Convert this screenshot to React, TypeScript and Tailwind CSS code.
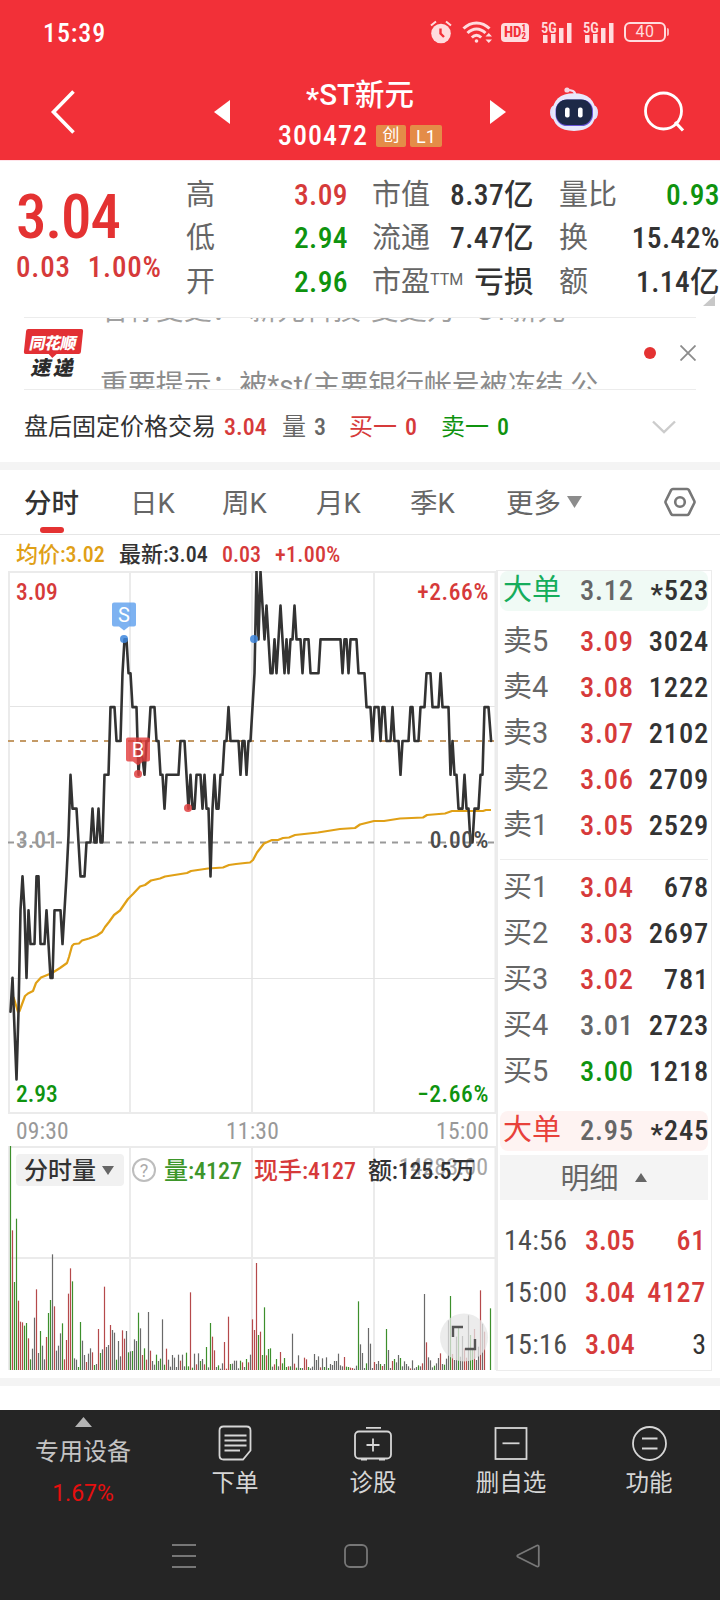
import type { ReactNode } from "react";

const NUM = "font-['Roboto_Condensed','Noto_Sans_CJK_SC',sans-serif]";
const CJK = "font-['Roboto','Noto_Sans_CJK_SC',sans-serif]";

const RED = "text-[#d63a3a]";
const GREEN = "text-[#0f930f]";
const DARK = "text-[#333333]";
const GRAY = "text-[#666666]";

// [minute, price in cents]
const PRICES: [number, number][] = [
  [0, 296], [1, 297], [3, 294], [4, 296], [5, 299], [6, 300], [7, 299], [8, 297], [9, 299], [10, 298],
  [12, 298], [13, 300], [14, 300], [15, 298], [17, 298], [18, 299], [19, 298], [20, 297], [21, 297], [22, 299],
  [25, 299], [26, 298], [27, 299], [28, 300], [29, 301.2], [30, 303], [31, 302], [33, 302], [34, 301], [35, 300],
  [37, 300], [38, 301], [40, 301], [41, 302], [42, 301], [43, 301], [44, 302], [45, 301], [46, 301], [47, 303],
  [49, 303], [50, 305], [52, 305], [53, 304], [55, 304], [56, 306], [57, 307], [58, 307], [59, 306], [60, 306],
  [61, 305], [63, 305], [64, 303], [65, 304], [66, 303.5], [67, 303], [68, 304], [69, 304], [70, 305], [72, 305],
  [73, 304], [74, 304], [75, 303], [76, 303], [77, 302], [78, 303], [84, 303], [85, 304], [87, 304], [88, 303],
  [89, 302], [90, 303], [91, 302], [92, 302], [93, 303], [95, 303], [96, 302], [97, 303], [98, 302], [99, 302],
  [100, 300], [101, 302], [102, 303], [103, 302], [104, 302], [105, 303], [106, 303], [107, 304], [108, 304], [109, 305],
  [110, 304], [114, 304], [115, 303], [116, 304], [117, 304], [118, 303], [119, 304], [120, 304], [121, 305], [122, 306],
  [123, 309], [124, 307], [125, 309], [126, 308], [127, 307], [128, 308], [129, 307], [130, 306], [131, 306], [132, 307],
  [133, 306], [134, 307], [135, 308], [136, 307], [137, 306], [138, 307], [139, 306], [140, 307], [141, 307], [142, 308],
  [143, 307], [145, 307], [146, 306], [147, 307], [149, 307], [150, 306], [154, 306], [155, 307], [165, 307], [166, 306],
  [167, 307], [168, 307], [169, 306], [170, 307], [173, 307], [174, 306], [177, 306], [178, 305], [180, 305], [181, 304],
  [182, 305], [184, 305], [185, 304], [186, 305], [187, 305], [188, 304], [190, 304], [191, 305], [192, 304], [194, 304],
  [195, 303], [196, 304], [199, 304], [200, 305], [201, 305], [202, 304], [204, 304], [205, 305], [207, 305], [208, 306],
  [210, 306], [211, 305], [214, 305], [215, 306], [216, 305], [219, 305], [220, 303], [221, 304], [222, 303], [223, 303],
  [224, 302], [226, 302], [227, 303], [228, 302], [229, 302], [230, 301], [231, 301], [232, 302], [234, 302], [235, 303],
  [236, 303], [237, 305], [239, 305], [240.3, 304],
];

const AVERAGE =
  "13.5,997 18,1012 19.5,1011 25,996 28,993.5 33,991 36,983 41,977.5 46,975.5 52,973 60,968 67,963 69,957 72,946 74,944 79,943.5 82,940.5 89,938.5 97,935.5 102,932 105,927 109,922 114,915 120,910.5 128,899 133,894 140,886.5 145,885 151,880.5 160,878.5 165,876.5 187,873 191,871 208,868.5 223,867.5 229,865 236,864 245,863 250,862.5 253,860 257,852.5 264,843.5 272,840 278,840 283,838 289,837.5 295,835 318,832.5 340,829 355,828 360,824.5 374,821 384,821 400,818.5 423,817.5 427,815 445,813.5 452,811 483,811 486,810 491,810";

// One bar per minute: height followed by its colour (r up, g down, k flat)
const VOLUMES =
  "672g 419r 264g 454g 208r 145r 143r 133g 141g 95r 32g 64k 157k 242r 51k 117g 73k 32k 99r 171g 210g 347k 191r 58k 73k 110k 140g 32r 90r 229r 305r 266g 35k 31k 9g 144g 88k 45k 24r 49k 65k 53r 15g 18k 123r 51g 62k 250r 69k 75k 135r 120k 112k 31g 87k 41k 119r 94r 117k 53g 56k 57g 92k 87k 172g 125k 45r 65g 31r 174k 58r 27k 16k 46g 27k 34g 152k 16g 64r 31k 10k 45k 37k 9k 46k 28r 46k 11k 52g 11g 233r 7g 49k 17r 50k 27g 33k 17r 69g 8k 141g 100r 59r 9k 14g 4k 20k 84r 4r 160r 18g 19k 28k 28k 5k 28g 23r 9k 33g 23r 46k 152r 120r 321r 105g 115r 45g 188g 44r 63g 65g 10k 17r 33g 11k 54r 20g 36g 9g 11r 11g 109k 19r 7g 44k 6g 6k 37r 32r 9g 5k 10k 48k 30k 41k 8r 35k 9g 38k 6g 18k 15k 27k 27k 49k 14k 11k 39r 10g 9g 7r 6r 4k 13k 206g 77k 51k 6k 20g 126k 79k 6k 24r 18k 27k 18g 12r 18k 123g 60k 6k 27r 33g 23k 45k 36g 11k 26k 18k 11k 5r 29k 5k 9k 14g 11k 20r 228k 83r 38k 29k 8k 13g 20k 36k 50r 18k 16g 34k 149k 222g 48r 30k 100k 130g 40k 102k 65r 37r 164k 105g 60g 123r 30k 70k 239r 139k 115r 0k 0k 185g".split(" ");

const BAR_COLORS: Record<string, string> = { r: "#b5494b", g: "#3d8f2c", k: "#6a6a6a" };

const minuteX = (m: number) => 10.5 + m * 2;
const priceY = (p: number) => 842.5 - (p - 301) * 33.85;

const STATS = [
  [["高", "3.09", RED], ["市值", "8.37亿", DARK], ["量比", "0.93", GREEN]],
  [["低", "2.94", GREEN], ["流通", "7.47亿", DARK], ["换", "15.42%", DARK]],
  [["开", "2.96", GREEN], ["市盈", "亏损", DARK], ["额", "1.14亿", DARK]],
];

const ASKS = [
  ["卖5", "3.09", "3024", RED],
  ["卖4", "3.08", "1222", RED],
  ["卖3", "3.07", "2102", RED],
  ["卖2", "3.06", "2709", RED],
  ["卖1", "3.05", "2529", RED],
];

const BIDS = [
  ["买1", "3.04", "678", RED],
  ["买2", "3.03", "2697", RED],
  ["买3", "3.02", "781", RED],
  ["买4", "3.01", "2723", GRAY],
  ["买5", "3.00", "1218", GREEN],
];

const TRADES = [
  ["14:56", "3.05", "61", RED],
  ["15:00", "3.04", "4127", RED],
  ["15:16", "3.04", "3", DARK],
];

function Signal() {
  return (
    <svg width="31" height="23" viewBox="0 0 31 23" fill="#ffdcde" overflow="visible">
      <text x="0" y="11.5" fontSize="14.5" fontWeight="600" className={NUM}>5G</text>
      <rect x="2" y="14" width="4.5" height="8" />
      <rect x="10" y="13" width="4.5" height="9" />
      <rect x="18" y="7" width="4.5" height="15" />
      <rect x="26" y="2" width="4.5" height="20" />
    </svg>
  );
}

function StatusBar() {
  return (
    <div className="flex h-16 items-center pl-[43px]">
      <span className={`${NUM} w-[387px] pt-[2px] text-[26px] font-medium tracking-[0.9px] text-white`}>15:39</span>
      <svg width="22" height="24" viewBox="0 0 22 24" fill="none" stroke="#ffdcde" strokeWidth="2">
        <circle cx="11" cy="13.5" r="9.8" fill="#ffdcde" stroke="none" />
        <path d="M1 5.5 6 1.5M21 5.5 16 1.5" />
        <path d="M10.5 8.5v5l3.5 3.5" stroke="#f23038" strokeWidth="2.4" />
      </svg>
      <svg className="ml-[10px]" width="31" height="24" viewBox="0 0 31 24" fill="none" stroke="#ffdcde" strokeWidth="3">
        <path d="M1.5 8.5C9 1 20 1 27.5 8.5M5.5 13C11 7.5 18 7.5 23.5 13M9.8 17.5C13 14.5 16 14.5 19.2 17.5" />
        <circle cx="14.5" cy="21" r="1.8" fill="#ffdcde" stroke="none" />
        <path d="M23.5 16.5 26.8 13l3.2 3.5zM23.5 19.5l3.3 3.5 3.2-3.5z" fill="#ffdcde" stroke="none" />
      </svg>
      <div className={`${NUM} ml-2 flex h-[19px] w-7 items-center justify-center rounded bg-[#ffdcde] text-[15px] font-bold text-[#f23038]`}>
        HD
        <span className="flex flex-col text-[9px] leading-[8px]">
          <span>1</span>
          <span>2</span>
        </span>
      </div>
      <div className="ml-3 flex gap-[11px]">
        <Signal />
        <Signal />
      </div>
      <div className="ml-[10px] flex items-center gap-px">
        <div className={`${CJK} flex h-5 w-[42px] items-center justify-center rounded-md border-2 border-[#ffdcde] bg-[#f3393f] text-[16px] tracking-[0.5px] text-[#ffdcde]`}>
          40
        </div>
        <div className="h-[8px] w-[2px] rounded-r bg-[#ffb4b8]" />
      </div>
    </div>
  );
}

function Robot() {
  return (
    <svg width="50" height="46" viewBox="0 0 50 46">
      <path d="M25 8C25.5 4 22 3 16.5 3" fill="none" stroke="#f3dcf0" strokeWidth="2.2" />
      <circle cx="17" cy="3" r="2.6" fill="#f5d5e2" />
      <ellipse cx="4" cy="25.5" rx="4" ry="7" fill="#dfe1fc" />
      <ellipse cx="44" cy="25.5" rx="4" ry="7" fill="#dfe1fc" />
      <path d="M24 6.3c14 0 21.5 7 21.5 19.2S38 43.9 24 43.9 2.5 37.7 2.5 25.5 10 6.3 24 6.3z" fill="#e8e8fb" />
      <rect x="5.5" y="12.5" width="37.5" height="26.5" rx="11.5" fill="#6a55d8" />
      <rect x="6" y="12.5" width="36" height="25.5" rx="11" fill="#1d2947" />
      <rect x="15" y="20.5" width="4.6" height="10" rx="2" fill="#fff" />
      <rect x="28" y="20.5" width="4.6" height="10" rx="2" fill="#fff" />
    </svg>
  );
}

function TitleBar() {
  return (
    <div className="flex h-24 items-center pl-[50px] text-white">
      <svg width="26" height="44" viewBox="0 0 26 44" fill="none" stroke="#fff" strokeWidth="3.6">
        <path d="M23.5 1.5 3.5 22l20 20.5" />
      </svg>
      <svg className="ml-[138px]" width="16" height="24" fill="#fff">
        <path d="M16 0v24L0 12z" />
      </svg>
      <div className="flex w-[260px] flex-col items-center">
        <div className={`${CJK} mt-[6px] text-[29.5px] leading-[38px] font-medium`}>
          <span className="inline-block translate-y-[4px]">*</span>
          ST新元
        </div>
        <div className="flex h-[40px] items-center gap-1 pt-1">
          <span className={`${NUM} mr-1 text-[28px] font-medium tracking-[1px]`}>300472</span>
          <span className={`${CJK} flex h-[22px] w-[30px] items-center justify-center rounded-xs bg-[#e48c48] text-[17px]`}>创</span>
          <span className={`${CJK} flex h-[22px] w-8 items-center justify-center rounded-xs bg-[#e48c48] text-[18px]`}>L1</span>
        </div>
      </div>
      <svg width="16" height="24" fill="#fff">
        <path d="M0 0v24l16-12z" />
      </svg>
      <div className="-mt-1 ml-[44px]">
        <Robot />
      </div>
      <svg className="ml-[43px]" width="42" height="42" viewBox="0 0 42 42" fill="none" stroke="#fff" strokeWidth="2.8">
        <circle cx="20.5" cy="20" r="18" />
        <path d="m32 31 8 8.5" strokeWidth="3.2" />
      </svg>
    </div>
  );
}

function Quote() {
  return (
    <section className="flex h-[157px] border-t border-[#ffe4ea] pl-4">
      <div className="w-[170px]">
        <div className={`${NUM} mt-[22px] text-[61px] leading-[68px] font-medium tracking-[-1.2px] text-[#e43232]`}>3.04</div>
        <div className={`${NUM} flex gap-[17px] text-[29px] leading-8 font-medium tracking-[0.8px] ${RED}`}>
          <span>0.03</span>
          <span>1.00%</span>
        </div>
      </div>
      <div className="mt-[12px] w-[534px]">
        {STATS.map((row) => (
          <div key={row[0][0]} className="grid h-[43.5px] grid-cols-[162px_24px_162px_25px_161px] items-center">
            {row.map(([label, value, color], i) => (
              <div key={label} className={`flex items-center justify-between ${i === 0 ? "col-start-1" : i === 1 ? "col-start-3" : "col-start-5"}`}>
                <span className={`${CJK} flex text-[29px] leading-9 ${GRAY}`}>
                  {label}
                  {label === "市盈" && <sup className="top-[8px] h-4 text-[16px] leading-none">TTM</sup>}
                </span>
                <span className={`${NUM} text-[29.5px] leading-9 font-medium tracking-[0.4px] whitespace-nowrap ${color}`}>{value}</span>
              </div>
            ))}
          </div>
        ))}
        <svg className="-mt-[9px] ml-[517px]" width="12" height="11" fill="#c8c8c8">
          <path d="M12 0v11H0z" />
        </svg>
      </div>
    </section>
  );
}

function News() {
  return (
    <section className="mx-6 flex h-[73px] items-center border-y border-[#ececec]">
      <div className="w-[60px]">
        <div className="relative ml-px flex h-[25px] w-[57px] -skew-x-6 items-center justify-center rounded-xs bg-[#e23034] text-white">
          <span className="-skew-x-6 font-['Noto_Sans_CJK_SC',sans-serif] text-[16px] font-black tracking-[-0.5px]">同花顺</span>
          <svg className="absolute top-[24px] left-6" width="10" height="6" fill="#e23034">
            <path d="M0 0h10L5 5z" />
          </svg>
        </div>
        <div className="mt-[2px] ml-[8px] -skew-x-12 font-['Noto_Sans_CJK_SC',sans-serif] text-[20px] leading-[22px] font-black tracking-[2.5px] text-[#2b2b2b]">
          速递
        </div>
      </div>
      <div className={`${CJK} h-full w-[526px] overflow-hidden pl-4 text-[27.9px] whitespace-pre`}>
        <p className="-mt-[23px] h-[62px] leading-[32px] text-[#a0a0a0]">名称变更：“新元科技”变更为“*ST新元”</p>
        <p className="mt-[10px] leading-[38px] text-[#8c8c8c]">重要提示：被*st(主要银行帐号被冻结 公</p>
      </div>
      <div className="ml-[34px] size-3 -translate-y-px rounded-full bg-[#e43232]" />
      <svg className="ml-6 -translate-y-px" width="16" height="16" stroke="#8c8c8c" strokeWidth="1.8">
        <path d="m.5.5 15 15m0-15-15 15" />
      </svg>
    </section>
  );
}

function AfterHours() {
  return (
    <section className={`${CJK} flex h-[72px] items-center pt-[2px] pl-6 text-[24px] ${DARK}`}>
      <span className="w-[200px]">盘后固定价格交易</span>
      <span className={`${NUM} w-[58px] font-medium ${RED}`}>3.04</span>
      <span className={`w-8 ${GRAY}`}>量</span>
      <span className={`${NUM} w-[35px] font-medium ${GRAY}`}>3</span>
      <span className={`w-[56px] ${RED}`}>买一</span>
      <span className={`${NUM} w-[36px] font-medium ${RED}`}>0</span>
      <span className={`w-[56px] ${GREEN}`}>卖一</span>
      <span className={`${NUM} w-[155px] font-medium ${GREEN}`}>0</span>
      <svg className="-mt-px" width="24" height="14" fill="none" stroke="#cccccc" strokeWidth="2.4">
        <path d="m1 1.5 11 10.5 11-10.5" />
      </svg>
    </section>
  );
}

function Tabs() {
  return (
    <nav className={`${CJK} flex h-[65px] items-center border-b border-[#e6e6e6] pt-[3px] pl-6 text-[27.5px] ${GRAY}`}>
      <div className={`relative w-[106px] font-medium ${DARK}`}>
        分时
        <div className="absolute -bottom-[9px] left-4 h-[6px] w-6 rounded-full bg-[#e43232]" />
      </div>
      <span className="w-[92px]">日K</span>
      <span className="w-[94px]">周K</span>
      <span className="w-[94px]">月K</span>
      <span className="w-[96px]">季K</span>
      <span className="w-[56px]">更多</span>
      <svg className="-mt-[3px] ml-[5px]" width="15" height="12" fill="#8c8c8c">
        <path d="M0 0h15L7.5 12z" />
      </svg>
      <svg className="-mt-[3px] ml-[82px]" width="32" height="30" viewBox="0 0 32 30" fill="none" stroke="#777" strokeWidth="2.6">
        <path d="M8.8 2h14.4q1 0 1.6 1l5.5 11q.5 1 0 2l-5.5 11q-.6 1-1.6 1H8.8q-1 0-1.6-1L1.7 16q-.5-1 0-2L7.2 3q.6-1 1.6-1z" />
        <circle cx="16" cy="15" r="4.8" />
      </svg>
    </nav>
  );
}

function Legend() {
  return (
    <div className={`${NUM} flex h-[35px] items-center pt-[3px] pl-4 text-[22px] font-medium whitespace-nowrap`}>
      <span className="w-[103px] text-[#e0a016]">均价:3.02</span>
      <span className={`w-[103px] ${DARK}`}>最新:3.04</span>
      <span className={`w-[53px] ${RED}`}>0.03</span>
      <span className={`tracking-[0.3px] ${RED}`}>+1.00%</span>
    </div>
  );
}

interface MarkerProps {
  x: number;
  y: number;
  letter: string;
  color: string;
}

function Marker({ x, y, letter, color }: MarkerProps) {
  return (
    <g fillOpacity={0.8}>
      <path d={`M${x - 10} ${y}h20q2 0 2 2v20q0 2-2 2h-5l-5 4-5-4h-5q-2 0-2-2v-20q0-2 2-2z`} fill={color} />
      <text x={x} y={y + 19.5} textAnchor="middle" fontSize="20" fontWeight="400" fill="#fff" fillOpacity={1} className={CJK}>
        {letter}
      </text>
    </g>
  );
}

function PriceChart() {
  const points = PRICES.map(([m, p]) => `${minuteX(m)},${priceY(p)}`).join(" ");
  return (
    <div className={`${NUM} relative h-[543px] text-[23.5px] leading-6 font-medium`}>
      <svg width="489" height="543" viewBox="8 571 489 543" fill="none">
        <path d="M130 571v542M252 571v542M374 571v542" stroke="#ebebeb" strokeWidth="2" />
        <path d="M8 706.5h488M8 978.5h488" stroke="#e4e4e4" />
        <rect x="9" y="572" width="486.5" height="541" stroke="#ebebeb" strokeWidth="2" />
        <path d="M8 741h487" stroke="#c49a66" strokeWidth="1.8" strokeDasharray="6 6" />
        <path d="M8 842.5h487" stroke="#999" strokeWidth="1.8" strokeDasharray="6 6" />
        <polyline points={AVERAGE} stroke="#e0a016" strokeWidth="2.2" strokeLinejoin="round" />
        <polyline points={points} stroke="#333" strokeWidth="2.6" strokeLinejoin="round" strokeLinecap="round" />
        <g fillOpacity={0.85}>
          <circle cx="124" cy="639" r="4" fill="#3d86dd" />
          <circle cx="254" cy="639" r="4" fill="#3d86dd" />
          <circle cx="138" cy="774" r="4" fill="#e04040" />
          <circle cx="188" cy="808" r="4" fill="#e04040" />
        </g>
        <Marker x={124} y={602.5} letter="S" color="#5c9fee" />
        <Marker x={138} y={737.5} letter="B" color="#e23a3a" />
      </svg>
      <span className={`absolute top-[9px] left-2 ${RED}`}>3.09</span>
      <span className={`absolute top-[9px] right-2 tracking-[0.6px] ${RED}`}>+2.66%</span>
      <span className="absolute top-[257px] left-2 text-[#999999]">3.01</span>
      <span className="absolute top-[257px] right-2 tracking-[0.5px] text-[#4d4d4d]">0.00%</span>
      <span className={`absolute bottom-2 left-2 ${GREEN}`}>2.93</span>
      <span className={`absolute right-2 bottom-2 tracking-[0.6px] ${GREEN}`}>−2.66%</span>
    </div>
  );
}

function VolumeChart() {
  return (
    <div className={`${NUM} relative h-[225px] text-[24px] font-medium`}>
      <svg width="489" height="225" viewBox="8 1146 489 225" fill="none">
        <path d="M130 1146v224M252 1146v224M374 1146v224M9 1146v224M495.5 1146v224M8 1147h488M8 1258h488" stroke="#ebebeb" strokeWidth="2" />
        {VOLUMES.map((v, i) => {
          const h = parseInt(v, 10) / 3;
          return <rect key={i} x={minuteX(i) - 0.6} y={1370 - h} width="1.2" height={h} fill={BAR_COLORS[v.slice(-1)]} />;
        })}
        <circle cx="464" cy="1337.5" r="24" fill="#e6e6e6" fillOpacity={0.75} />
        <path d="M453 1337v-10h10M475 1339v10h-10" stroke="#555" strokeWidth="2.4" />
      </svg>
      <span className="absolute top-[7px] right-[9px] leading-7 font-normal text-[#a6a6a6]">14283.00</span>
      <div className="absolute top-2 left-2 flex h-8 items-center whitespace-nowrap">
        <div className={`flex h-8 w-[108px] items-center justify-center gap-1.5 rounded bg-[#f1f1f1] pt-px pr-0.5 ${DARK}`}>
          分时量
          <svg width="12" height="9" fill="#666">
            <path d="M0 0h12L6 9z" />
          </svg>
        </div>
        <div className={`${CJK} ml-2 flex size-6 items-center justify-center rounded-full border-2 border-[#bdbdbd] text-[18px] font-normal text-[#aaaaaa]`}>
          ?
        </div>
        <span className="ml-[8px] w-[90px] pt-[2px] text-[#3d962a]">量:4127</span>
        <span className={`w-[114px] pt-[2px] ${RED}`}>现手:4127</span>
        <span className={`pt-[2px] tracking-[-0.2px] ${DARK}`}>额:125.5万</span>
      </div>
    </div>
  );
}

interface DepthRowProps {
  label: string;
  price: string;
  volume: string;
  color: string;
}

function DepthRow({ label, price, volume, color }: DepthRowProps) {
  return (
    <div className={`${NUM} flex h-[46px] items-center pl-[3px] text-[28.5px] font-medium tracking-[0.8px]`}>
      <span className={`${CJK} w-[77px] text-[29px] font-normal tracking-normal ${GRAY}`}>{label}</span>
      <span className={color}>{price}</span>
      <span className={`ml-auto -mr-px ${DARK}`}>{volume}</span>
    </div>
  );
}

function BigOrder({ price, volume, className }: { price: string; volume: string; className: string }) {
  return (
    <div className={`${NUM} flex h-10 items-center rounded-lg pl-[3px] text-[28.5px] font-medium tracking-[0.8px] ${className}`}>
      <span className={`${CJK} w-[77px] text-[29px] font-normal tracking-normal`}>大单</span>
      <span className={GRAY}>{price}</span>
      <span className={`ml-auto -mr-px flex ${DARK}`}>
        <span className="translate-y-[4px]">*</span>
        {volume}
      </span>
    </div>
  );
}

function Depth() {
  return (
    <aside className="-mt-px -ml-px h-[801px] w-[216px] border border-l-2 border-[#ececec] pr-[3px] pl-[2px]">
      <BigOrder price="3.12" volume="523" className="bg-[#f0faf5] text-[#15ad5c]" />
      <div className="mt-[8px]">
        {ASKS.map(([label, price, volume, color]) => (
          <DepthRow key={label} label={label} price={price} volume={volume} color={color} />
        ))}
      </div>
      <div className="mt-[10px] mb-[5px] h-px bg-[#ededed]" />
      {BIDS.map(([label, price, volume, color]) => (
        <DepthRow key={label} label={label} price={price} volume={volume} color={color} />
      ))}
      <div className="mt-4">
        <BigOrder price="2.95" volume="245" className="bg-[#fef3f2] text-[#e8413b]" />
      </div>
      <div className={`${CJK} mt-[4px] flex h-[45px] items-center justify-center gap-4 bg-[#f4f4f4] pt-[5px] pr-px text-[29px] ${GRAY}`}>
        明细
        <svg className="-mt-[5px]" width="12" height="9" fill="#666">
          <path d="M6 0 12 9H0z" />
        </svg>
      </div>
      <div className="mt-[15px]">
        {TRADES.map(([time, price, volume, color]) => (
          <div key={time} className={`${NUM} flex h-[52px] items-center pr-[2px] pl-1 text-[28px] font-medium`}>
            <span className="w-[81px] font-normal tracking-[0.3px] text-[#4d4d4d]">{time}</span>
            <span className={RED}>{price}</span>
            <span className={`ml-auto ${color} ${volume.length > 1 ? "tracking-[0.7px]" : "font-normal"}`}>{volume}</span>
          </div>
        ))}
      </div>
    </aside>
  );
}

function Action({ label, children }: { label: string; children: ReactNode }) {
  return (
    <div className="flex w-[138px] flex-col items-center">
      <svg className="mt-[14px]" width="40" height="38" viewBox="0 0 40 38" fill="none" stroke="#d6d6d6" strokeWidth="1.8">
        {children}
      </svg>
      <span className="mt-1 text-[23.5px] leading-[34px] text-[#d6d6d6]">{label}</span>
    </div>
  );
}

function BottomBar() {
  return (
    <footer className={`${CJK} h-[190px] bg-[#252525]`}>
      <div className="flex h-[122px]">
        <div className="flex w-[166px] flex-col items-center">
          <svg className="mt-[7px]" width="17" height="10" fill="#b4b4b4">
            <path d="M8.5 0 17 10H0z" />
          </svg>
          <span className="mt-[8px] text-[24px] leading-[34px] text-[#c4c4c4]">专用设备</span>
          <span className="mt-2 text-[23px] leading-[34px] text-[#e60f0f]">1.67%</span>
        </div>
        <Action label="下单">
          <path d="M8.5 2.5h23q4 0 4 4v20l-7.5 9H8.5q-4 0-4-4v-25q0-4 4-4z" />
          <path d="M9.5 11.5h22M9.5 16.5h22M9.5 21.5h22M9.5 26.5h15.5" />
        </Action>
        <Action label="诊股">
          <rect x="2" y="7.5" width="36" height="27" rx="4" />
          <path d="M13 3.8h15M8 35.5h6M26 35.5h6M13.5 21h13M20 14.5v13" />
        </Action>
        <Action label="删自选">
          <rect x="4.5" y="4" width="31" height="31" />
          <path d="M11.5 19.3h17" />
        </Action>
        <Action label="功能">
          <circle cx="20.5" cy="19.5" r="16.5" />
          <path d="M13 14.5h15.5M13 24.5h15.5" />
        </Action>
      </div>
      <div className="flex justify-center gap-[148px] pt-3 pr-[8px]">
        <svg width="24" height="24" stroke="#777" strokeWidth="2">
          <path d="M0 1h24M0 12h24M0 23h24" />
        </svg>
        <svg width="24" height="24" fill="none" stroke="#777" strokeWidth="1.8">
          <rect x="1" y="1" width="22" height="22" rx="5" />
        </svg>
        <svg width="24" height="24" fill="none" stroke="#777" strokeWidth="1.8" strokeLinejoin="round">
          <path d="M21 1.5 2 11q-1.5 1 0 2l19 9.5q1.8.5 1.8-1.5v-18q0-2-1.8-1.5z" />
        </svg>
      </div>
    </footer>
  );
}

export default function App() {
  return (
    <div className="h-[1600px] w-[720px] overflow-hidden bg-white">
      <header className="bg-[#f23038]">
        <StatusBar />
        <TitleBar />
      </header>
      <Quote />
      <News />
      <AfterHours />
      <div className="h-2 bg-[#f4f4f4]" />
      <Tabs />
      <Legend />
      <main className="flex h-[808px] pt-[1px] pl-2">
        <div className="w-[489px]">
          <PriceChart />
          <div className={`${NUM} flex h-8 justify-between pr-2 pl-2 text-[23.5px] leading-[34px] tracking-[0.2px] text-[#999999]`}>
            <span>09:30</span>
            <span>11:30</span>
            <span>15:00</span>
          </div>
          <VolumeChart />
        </div>
        <Depth />
      </main>
      <div className="h-2 bg-[#f4f4f4]" />
      <div className="h-6" />
      <BottomBar />
    </div>
  );
}
